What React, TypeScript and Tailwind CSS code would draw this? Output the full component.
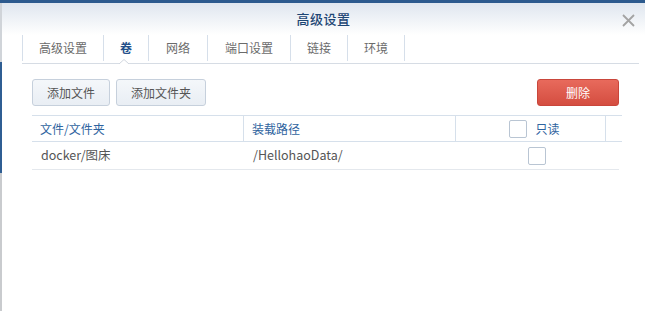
const font = { fontFamily: '"Noto Sans CJK SC", "Liberation Sans", sans-serif' };

const tabs = [
  { label: "高级设置", w: "w-[81px]" },
  { label: "卷", w: "w-[45px]", active: true },
  { label: "网络", w: "w-[59px]" },
  { label: "端口设置", w: "w-[83px]" },
  { label: "链接", w: "w-[57px]" },
  { label: "环境", w: "w-[58px]" },
];

function Checkbox() {
  return <span className="block w-[18px] h-[18px] rounded-[2px] border border-[#b9c5d3] bg-white" />;
}

export default function App() {
  return (
    <div className="w-[645px] h-[311px] bg-white flex flex-col overflow-hidden" style={font}>
      {/* top window edge */}
      <div className="h-[3px] shrink-0 bg-[#2c5a8e]" />

      <div className="flex flex-1">
        {/* background peeking on the left */}
        <div className="w-[2px] shrink-0 flex flex-col">
          <div className="h-[59px] bg-[#d0d4d9]" />
          <div className="h-[111px] bg-[#2f5e93]" />
          <div className="flex-1 bg-[#c9cbce]" />
        </div>

        <div className="flex-1 min-w-0 flex flex-col">
          {/* ── Header ── */}
          <div className="relative h-[32px] flex items-center justify-center bg-gradient-to-b from-[#dfe6ef] to-white">
            <span className="text-[13px] font-medium text-[#1d4674] tracking-[0.5px]">高级设置</span>
            <svg className="absolute right-[10px] top-[11px]" width="13" height="13" viewBox="0 0 13 13">
              <path d="M1 1 L12 12 M12 1 L1 12" stroke="#a3a3a3" strokeWidth="1.8" />
            </svg>
          </div>

          {/* ── Tabs ── */}
          <div className="relative ml-[20px] mr-[6px] h-[29px] flex items-start border-b border-[#d6dce4]">
            {tabs.map((t, i) => (
              <div
                key={t.label}
                className={`relative ${t.w} h-[26px] flex items-center justify-center border-l border-[#d6dfea] ${
                  i === tabs.length - 1 ? "border-r" : ""
                }`}
              >
                <span className={`text-[12px] ${t.active ? "text-[#24508a] font-bold" : "text-[#6b6b6b]"}`}>
                  {t.label}
                </span>
                {t.active && (
                  <svg className="absolute left-[15px] top-[24px]" width="10" height="5" viewBox="0 0 10 5">
                    <path d="M0 5 L5 0.5 L10 5" fill="white" stroke="#d0d6de" strokeWidth="1" />
                  </svg>
                )}
              </div>
            ))}
          </div>

          {/* ── Content ── */}
          <div className="pl-[30px] pr-[23px] pt-[15px]">
            <div className="flex items-center gap-[6px]">
              <button className="w-[78px] h-[27px] rounded-[3px] border border-[#c6d0dc] bg-gradient-to-b from-[#f4f7fa] to-[#e9eef4] text-[12px] text-[#555]">
                添加文件
              </button>
              <button className="w-[90px] h-[27px] rounded-[3px] border border-[#c6d0dc] bg-gradient-to-b from-[#f4f7fa] to-[#e9eef4] text-[12px] text-[#555]">
                添加文件夹
              </button>
              <button className="ml-auto mr-[3px] w-[82px] h-[27px] rounded-[3px] border border-[#c9463b] bg-gradient-to-b from-[#e86a5c] to-[#d44d40] text-[12px] text-white">
                删除
              </button>
            </div>

            <div className="mt-[9px] w-[590px]">
              <div className="flex h-[27px] border-y border-[#d6e0eb] text-[12px] text-[#2f64a0]">
                <div className="w-[212px] flex items-center pl-[8px] border-r border-[#d6e0eb]">文件/文件夹</div>
                <div className="w-[212px] flex items-center pl-[8px] border-r border-[#d6e0eb]">装载路径</div>
                <div className="w-[150px] flex items-center justify-center gap-[8px] pl-[8px] border-r border-[#d6e0eb]">
                  <Checkbox />
                  <span>只读</span>
                </div>
                <div className="flex-1" />
              </div>
              <div className="flex h-[28px] w-[587px] border-b border-[#e4e8ed] text-[12.5px] text-[#555]">
                <div className="w-[212px] flex items-center pl-[9px]">docker/图床</div>
                <div className="w-[212px] flex items-center pl-[9px]">/HellohaoData/</div>
                <div className="w-[150px] flex items-center justify-center pl-[11px]">
                  <Checkbox />
                </div>
              </div>
            </div>
          </div>
        </div>
      </div>
    </div>
  );
}
